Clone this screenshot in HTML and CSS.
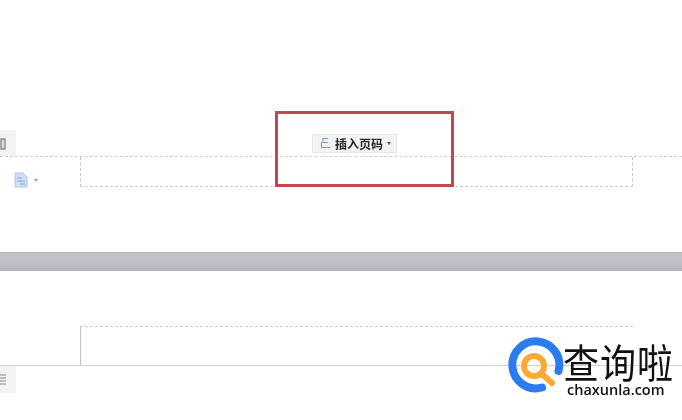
FILE: index.html
```html
<!DOCTYPE html>
<html lang="zh-CN">
  <head>
    <meta charset="UTF-8" />
    <title>插入页码</title>
    <link rel="stylesheet" href="styles.css">
  </head>

  <body>
    <div id="canvas">
      <!-- page 1, footer area -->
      <div class="page page-first">
        <div class="side-tab">
          <svg width="16" height="26" viewBox="0 0 16 26">
            <path d="M1 9h4v10H1z" fill="#ddd" stroke="#8a8a8a" stroke-width="1.4" />
          </svg>
        </div>
        <div class="footer-row">
          <div class="footer-left">
            <svg width="14" height="16" viewBox="0 0 14 16">
              <path d="M1 1h8l4 4v10H1z" fill="#cfe0f2" stroke="#a9c6e4" />
              <path d="M3 6h5M3 9h8M6 12h5" stroke="#7fa6d0" stroke-width="1.2" />
            </svg>
            <span class="caret caret-light"></span>
          </div>
          <div class="footer-box"></div>
        </div>
      </div>

      <div class="band"></div>

      <!-- page 2, header area -->
      <div class="page page-second">
        <div class="header-row">
          <div class="header-box"></div>
        </div>
        <div class="side-tab side-tab-low">
          <svg width="16" height="26" viewBox="0 0 16 26">
            <path d="M0 9h6M0 12h6M0 15h6M0 18h6" stroke="#8a8a8a" stroke-width="1.2" />
          </svg>
        </div>
      </div>

      <div class="highlight"></div>
      <button class="page-btn">
        <svg width="12" height="13" viewBox="0 0 12 13">
          <path d="M3 1.5h6M4 1.5v4h5M2.5 5v5.5h9" fill="none" stroke="#8a9ac6" stroke-width="1.1" />
        </svg>
        <span>插入页码</span>
        <span class="caret"></span>
      </button>

      <div class="logo">
        <svg width="58" height="58" viewBox="0 0 58 58">
          <path d="M51.5 35A23.5 23.5 0 1 0 35 51.5" fill="none" stroke="#2b7cf0" stroke-width="8" stroke-linecap="round" />
          <circle cx="27" cy="30" r="10" fill="none" stroke="#f9a934" stroke-width="6" />
          <path d="M35 38l10 9" stroke="#f9a934" stroke-width="6" stroke-linecap="round" />
        </svg>
        <div class="logo-text">
          <div class="logo-name">查询啦</div>
          <div class="logo-url">chaxunla.com</div>
        </div>
      </div>
    </div>
  </body>
</html>
```

FILE: styles.css
```css
body {
  margin: 0;
  font-family: "Liberation Sans", "Noto Sans CJK SC", sans-serif;
  background-color: #fff;
}

/* the source is a soft jpeg, so everything gets a little blur */
#canvas {
  position: relative;
  width: 682px;
  height: 420px;
  overflow: hidden;
  background-color: #fff;
  filter: blur(0.4px);
}

.page-first {
  height: 252px;
  padding-top: 130px;
  box-sizing: border-box;
}

.side-tab {
  width: 16px;
  height: 26px;
  background-color: #f3f3f3;
}

.side-tab-low {
  height: 27px;
}

.footer-row {
  display: flex;
  border-top: 1px dashed #cfcfcf;
}

.footer-left {
  width: 80px;
  box-sizing: border-box;
  padding: 15px 0 0 14px;
  display: flex;
  align-items: flex-start;
  gap: 6px;
}

.footer-box {
  width: 553px;
  height: 29px;
  border-left: 1px dashed #c8c8c8;
  border-right: 1px dashed #c8c8c8;
  border-bottom: 1px dashed #cfcfcf;
  margin-right: 49px;
}

.caret {
  display: inline-block;
  width: 0;
  height: 0;
  border-left: 2.5px solid transparent;
  border-right: 2.5px solid transparent;
  border-top: 3px solid #555;
}

.caret-light {
  margin-top: 7px;
  border-top-color: #999;
}

.band {
  height: 19px;
  background: linear-gradient(#c4c4ca, #bdbdc8 70%, #b3b3c0);
  border-top: 1px solid #b4b4b4;
  box-sizing: border-box;
}

.page-second {
  height: 149px;
  padding-top: 55px;
  box-sizing: border-box;
}

.header-row {
  padding-left: 80px;
  height: 40px;
  box-sizing: border-box;
  border-bottom: 1px solid #d2d2d2;
}

.header-box {
  width: 553px;
  height: 39px;
  box-sizing: border-box;
  border-top: 1px dashed #cfcfcf;
  border-left: 1px solid #c4c4c4;
}

.highlight {
  position: absolute;
  left: 275px;
  top: 111px;
  width: 179px;
  height: 76px;
  box-sizing: border-box;
  border: 3px solid #bd4a4f;
}

.page-btn {
  position: absolute;
  left: 312px;
  top: 134px;
  width: 85px;
  height: 19px;
  padding: 0 0 0 6px;
  display: flex;
  align-items: center;
  gap: 4px;
  border: 1px solid #e6e6e6;
  background-color: #f3f3f3;
  color: #262626;
  font-family: "Noto Sans CJK SC", sans-serif;
  font-size: 12px;
  font-weight: 700;
}

.page-btn svg {
  flex: none;
}

.logo {
  position: absolute;
  left: 507px;
  top: 336px;
  display: flex;
  align-items: flex-start;
}

.logo-text {
  margin-left: -2px;
  color: #111;
}

.logo-name {
  font-family: "Noto Sans CJK SC", sans-serif;
  font-size: 36px;
  line-height: 36px;
  letter-spacing: 1px;
  white-space: nowrap;
  transform: scaleY(1.12);
  transform-origin: top;
  margin-top: 4px;
}

.logo-url {
  margin: 6px 0 0 4px;
  font-family: "Open Sans", sans-serif;
  font-size: 14.5px;
  font-weight: 600;
  line-height: 16px;
  white-space: nowrap;
}
```
